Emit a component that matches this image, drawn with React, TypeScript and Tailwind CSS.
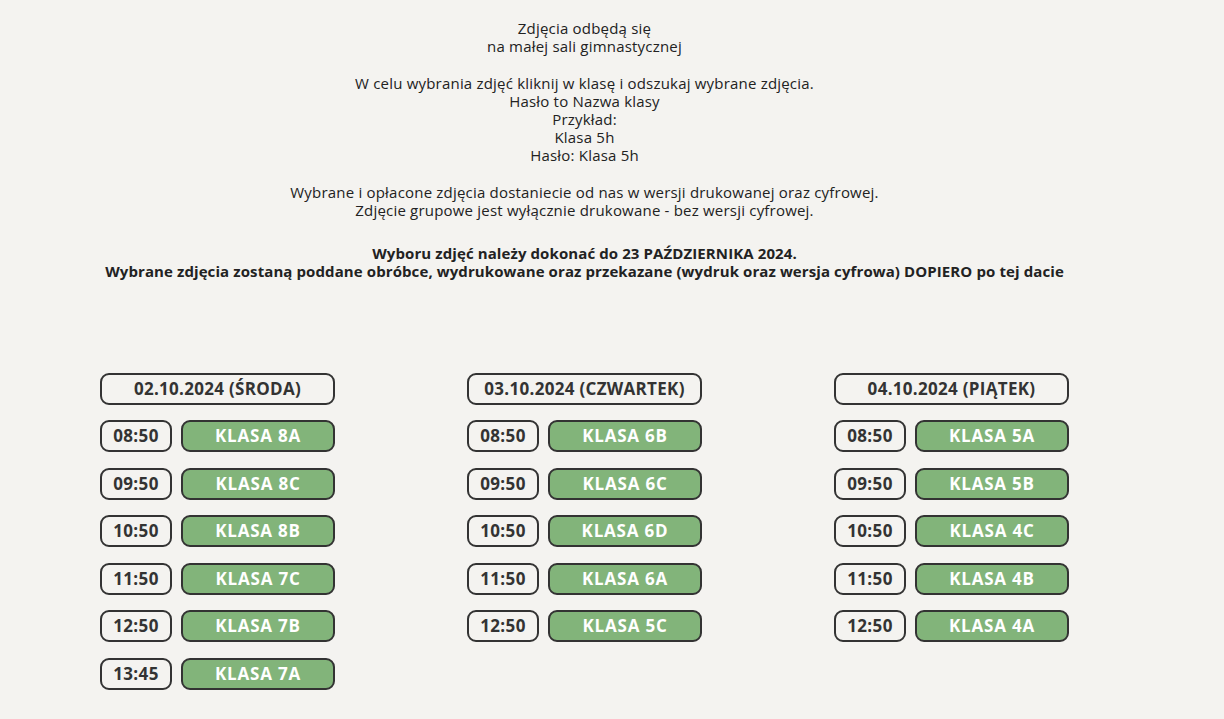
import React from "react";

const cols = [
  {
    date: "02.10.2024 (ŚRODA)",
    rows: [
      ["08:50", "KLASA 8A"],
      ["09:50", "KLASA 8C"],
      ["10:50", "KLASA 8B"],
      ["11:50", "KLASA 7C"],
      ["12:50", "KLASA 7B"],
      ["13:45", "KLASA 7A"],
    ],
  },
  {
    date: "03.10.2024 (CZWARTEK)",
    rows: [
      ["08:50", "KLASA 6B"],
      ["09:50", "KLASA 6C"],
      ["10:50", "KLASA 6D"],
      ["11:50", "KLASA 6A"],
      ["12:50", "KLASA 5C"],
    ],
  },
  {
    date: "04.10.2024 (PIĄTEK)",
    rows: [
      ["08:50", "KLASA 5A"],
      ["09:50", "KLASA 5B"],
      ["10:50", "KLASA 4C"],
      ["11:50", "KLASA 4B"],
      ["12:50", "KLASA 4A"],
    ],
  },
];

export default function App() {
  return (
    <div
      className="min-h-screen bg-[#f4f3f0] text-[#222222]"
      style={{ fontFamily: '"Open Sans", "Liberation Sans", sans-serif' }}
    >
      <div className="w-[1169px]">
        <div className="pt-[19px] text-center text-[15px] leading-[18.2px] tracking-[0.2px]">
          <p>Zdjęcia odbędą się<br />na małej sali gimnastycznej</p>
          <p className="mt-[18.2px]">
            W celu wybrania zdjęć kliknij w klasę i odszukaj wybrane zdjęcia.<br />
            Hasło to Nazwa klasy<br />
            Przykład:<br />
            Klasa 5h<br />
            Hasło: Klasa 5h
          </p>
          <p className="mt-[18.2px]">
            Wybrane i opłacone zdjęcia dostaniecie od nas w wersji drukowanej oraz cyfrowej.<br />
            Zdjęcie grupowe jest wyłącznie drukowane - bez wersji cyfrowej.
          </p>
          <p className="mt-[25px] font-bold tracking-[0.1px]">
            Wyboru zdjęć należy dokonać do 23 PAŹDZIERNIKA 2024.<br />
            Wybrane zdjęcia zostaną poddane obróbce, wydrukowane oraz przekazane (wydruk oraz wersja cyfrowa) DOPIERO po tej dacie
          </p>
        </div>
        <div className="mt-[92px] flex pl-[100px] gap-[132px]">
          {cols.map((c) => (
            <div key={c.date} className="w-[235px] flex flex-col gap-[15.5px]">
              <div className="h-[32px] rounded-[9px] border-2 border-[#333333] flex items-center justify-center text-[17px] font-bold text-[#333333] tracking-[0.3px]">
                {c.date}
              </div>
              {c.rows.map(([t, k]) => (
                <div key={k} className="flex gap-[9px]">
                  <div className="w-[72px] h-[32px] rounded-[9px] border-2 border-[#333333] flex items-center justify-center text-[17px] font-bold text-[#333333] tracking-[0.4px]">
                    {t}
                  </div>
                  <div className="flex-1 h-[32px] rounded-[9px] border-2 border-[#333333] bg-[#82b47a] flex items-center justify-center text-[17px] font-bold text-white tracking-[0.8px]">
                    {k}
                  </div>
                </div>
              ))}
            </div>
          ))}
        </div>
      </div>
    </div>
  );
}
